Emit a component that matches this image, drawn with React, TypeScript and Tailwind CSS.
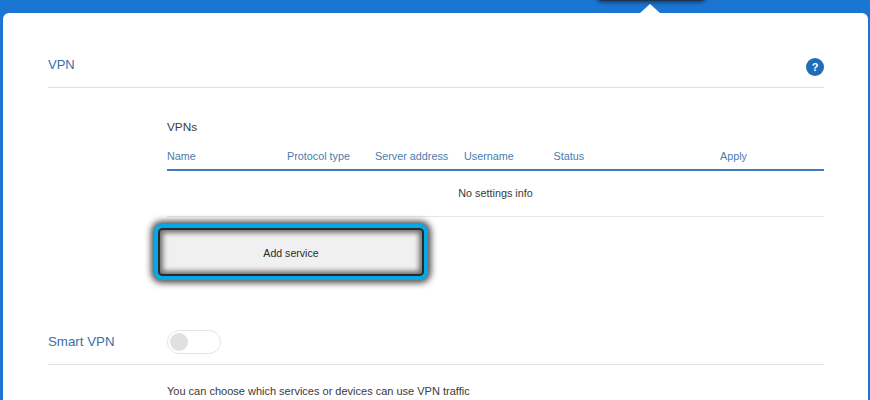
const sans = "font-['Liberation_Sans',Arial,sans-serif]";

const columns = [
  { label: "Name", width: "w-[120px]" },
  { label: "Protocol type", width: "w-[88px]" },
  { label: "Server address", width: "w-[89px]" },
  { label: "Username", width: "w-[89.5px]" },
  { label: "Status", width: "w-[166.5px]" },
  { label: "Apply", width: "flex-1" },
];

export default function App() {
  return (
    <div className={`relative h-[400px] w-[870px] overflow-hidden bg-[#1a76d2] pl-[3px] pr-[2px] pt-[13px] ${sans}`}>
      {/* dark tab peeking in from the top */}
      <div className="absolute left-[596px] top-[-6px] h-[7px] w-[110px] rounded-b-md bg-[#1c3554] shadow-[0_1px_4px_rgba(10,30,60,0.8)]" />
      <div className="absolute left-[640px] top-[4px] h-0 w-0 border-x-[10px] border-b-[9px] border-x-transparent border-b-white" />

      <div className="h-full rounded-t-[6px] bg-white pl-[45px] pr-[44px]">
        <div className="flex h-[75px] items-start justify-between border-b border-[#dfdfdf] pt-[44px]">
          <span className="text-[13px] leading-[15px] text-[#3a6ea8]">VPN</span>
          <span className="mt-[1px] flex h-[18px] w-[18px] items-center justify-center rounded-full bg-[#1f6db8] text-[11px] font-bold leading-none text-white">
            ?
          </span>
        </div>

        <div className="ml-[119px] pt-[33px]">
          <div className="text-[11.8px] leading-[13px] text-[#3a3a3a]">VPNs</div>
          <div className="mt-[16px] flex h-[21px] border-b-2 border-[#3f7fc0] text-[10.8px] leading-[13px] text-[#4a7cb0]">
            {columns.map((c) => (
              <span key={c.label} className={c.width}>
                {c.label}
              </span>
            ))}
          </div>
          <div className="flex h-[46px] items-center justify-center border-b border-[#e6e6e6] text-[10.8px] text-[#3a3a3a]">
            No settings info
          </div>
          <div className="ml-[-13px] mt-[7px] h-[56px] w-[274px] rounded-[8px] border-[4px] border-[#06a9e8] bg-[#f0f0f0] shadow-[0_0_6px_3px_rgba(20,20,20,0.75),inset_0_0_0_2px_#2a2a2a,inset_0_0_5px_5px_rgba(70,70,70,0.75)]">
            <button className="flex h-full w-full items-center justify-center pt-[3px] text-[10.6px] text-[#2a2a2a]">
              Add service
            </button>
          </div>
        </div>

        <div className="mt-[50px] flex h-[35px] items-start border-b border-[#e3e3e3]">
          <span className="w-[119px] pt-[4px] text-[13.3px] leading-[15px] text-[#3a6ea8]">Smart VPN</span>
          <span className="flex h-[24px] w-[54px] items-center rounded-full border border-[#e4e4e4] bg-white pl-[2px]">
            <span className="h-[18px] w-[18px] rounded-full bg-[#e0e0e0]" />
          </span>
        </div>

        <p className="ml-[119px] mt-[20px] text-[11px] leading-[13px] text-[#3a3a3a]">
          You can choose which services or devices can use VPN traffic
        </p>
      </div>
    </div>
  );
}
